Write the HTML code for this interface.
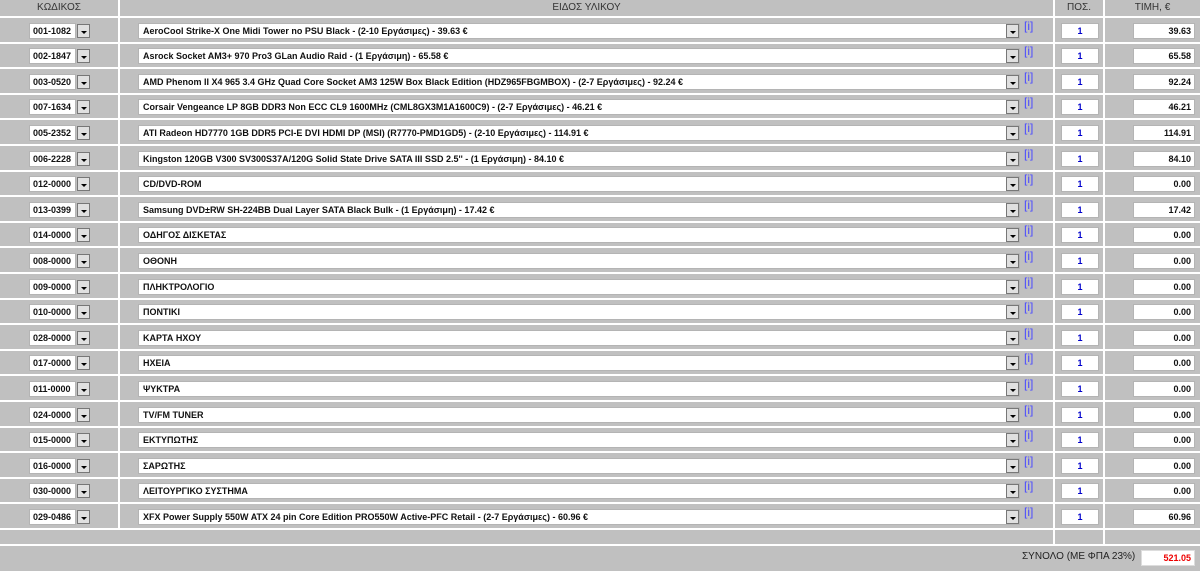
<!DOCTYPE html><html><head><meta charset="utf-8"><style>
body{margin:0;width:1200px;height:570px;overflow:hidden;background:#fff;font-family:"Liberation Sans","DejaVu Sans",sans-serif;}
.c{position:absolute;background:#c0c0c0;}
.h{font-size:10px;color:#333;text-align:center;line-height:16px;}
.box{position:absolute;background:#fff;border:1px solid #b4b4b4;box-sizing:border-box;font-size:9px;font-weight:bold;color:#111;line-height:15px;white-space:nowrap;overflow:hidden;}
.btn{position:absolute;width:13px;height:14px;background:#e0e0e0;border:1px solid #777;box-sizing:border-box;}
.btn:after{content:"";position:absolute;left:3px;top:6px;border-left:3px solid transparent;border-right:3px solid transparent;border-top:3px solid #000;}
.i{position:absolute;font-size:12px;color:#4a4aff;}
</style></head><body>
<div class="c h" style="left:0;top:0;width:118px;height:16px">ΚΩΔΙΚΟΣ</div>
<div class="c h" style="left:120px;top:0;width:933px;height:16px">ΕΙΔΟΣ ΥΛΙΚΟΥ</div>
<div class="c h" style="left:1055px;top:0;width:48px;height:16px">ΠΟΣ.</div>
<div class="c h" style="left:1105px;top:0;width:95px;height:16px">ΤΙΜΗ, €</div>
<div id="rows"></div>
<script>
var d=[["001-1082","AeroCool Strike-X One Midi Tower no PSU Black - (2-10 Εργάσιμες) - 39.63 €","39.63"],
["002-1847","Asrock Socket AM3+ 970 Pro3 GLan Audio Raid - (1 Εργάσιμη) - 65.58 €","65.58"],
["003-0520","AMD Phenom II X4 965 3.4 GHz Quad Core Socket AM3 125W Box Black Edition (HDZ965FBGMBOX) - (2-7 Εργάσιμες) - 92.24 €","92.24"],
["007-1634","Corsair Vengeance LP 8GB DDR3 Non ECC CL9 1600MHz (CML8GX3M1A1600C9) - (2-7 Εργάσιμες) - 46.21 €","46.21"],
["005-2352","ATI Radeon HD7770 1GB DDR5 PCI-E DVI HDMI DP (MSI) (R7770-PMD1GD5) - (2-10 Εργάσιμες) - 114.91 €","114.91"],
["006-2228","Kingston 120GB V300 SV300S37A/120G Solid State Drive SATA III SSD 2.5'' - (1 Εργάσιμη) - 84.10 €","84.10"],
["012-0000","CD/DVD-ROM","0.00"],
["013-0399","Samsung DVD±RW SH-224BB Dual Layer SATA Black Bulk - (1 Εργάσιμη) - 17.42 €","17.42"],
["014-0000","ΟΔΗΓΟΣ ΔΙΣΚΕΤΑΣ","0.00"],["008-0000","ΟΘΟΝΗ","0.00"],["009-0000","ΠΛΗΚΤΡΟΛΟΓΙΟ","0.00"],
["010-0000","ΠΟΝΤΙΚΙ","0.00"],["028-0000","ΚΑΡΤΑ ΗΧΟΥ","0.00"],["017-0000","ΗΧΕΙΑ","0.00"],
["011-0000","ΨΥΚΤΡΑ","0.00"],["024-0000","TV/FM TUNER","0.00"],["015-0000","ΕΚΤΥΠΩΤΗΣ","0.00"],
["016-0000","ΣΑΡΩΤΗΣ","0.00"],["030-0000","ΛΕΙΤΟΥΡΓΙΚΟ ΣΥΣΤΗΜΑ","0.00"],
["029-0486","XFX Power Supply 550W ATX 24 pin Core Edition PRO550W Active-PFC Retail - (2-7 Εργάσιμες) - 60.96 €","60.96"]];
var h="";
for(var k=0;k<d.length;k++){var t=18+k*25.6,b=t+4.5;var r=d[k];
h+='<div class="c" style="left:0;top:'+t+'px;width:118px;height:23.6px"></div>';
h+='<div class="c" style="left:120px;top:'+t+'px;width:933px;height:23.6px"></div>';
h+='<div class="c" style="left:1055px;top:'+t+'px;width:48px;height:23.6px"></div>';
h+='<div class="c" style="left:1105px;top:'+t+'px;width:95px;height:23.6px"></div>';
h+='<div class="box" style="left:29px;top:'+b+'px;width:47px;height:16px;padding-left:3px">'+r[0]+'</div>';
h+='<div class="btn" style="left:77px;top:'+(b+1)+'px"></div>';
h+='<div class="box" style="left:138px;top:'+b+'px;width:882px;height:16px;padding-left:4px">'+r[1]+'</div>';
h+='<div class="btn" style="left:1006px;top:'+(b+1)+'px"></div>';
h+='<div class="i" style="left:1024px;top:'+(b-4)+'px">[i]</div>';
h+='<div class="box" style="left:1061px;top:'+b+'px;width:38px;height:16px;text-align:center;color:#00c">1</div>';
h+='<div class="box" style="left:1133px;top:'+b+'px;width:62px;height:16px;text-align:right;padding-right:3px">'+r[2]+'</div>';}
var t=18+20*25.6;
h+='<div class="c" style="left:0;top:'+t+'px;width:1053px;height:13.6px"></div>';
h+='<div class="c" style="left:1055px;top:'+t+'px;width:48px;height:13.6px"></div>';
h+='<div class="c" style="left:1105px;top:'+t+'px;width:95px;height:13.6px"></div>';
h+='<div class="c" style="left:0;top:545.6px;width:1200px;height:25px"></div>';
h+='<div style="position:absolute;left:1022px;top:551px;font-size:10px;color:#222">ΣΥΝΟΛΟ (ΜΕ ΦΠΑ 23%)</div>';
h+='<div class="box" style="left:1141px;top:550px;width:54px;height:16px;text-align:right;padding-right:3px;color:#e00;border-color:#ddd">521.05</div>';
document.getElementById("rows").outerHTML=h;
</script>
</body></html>
